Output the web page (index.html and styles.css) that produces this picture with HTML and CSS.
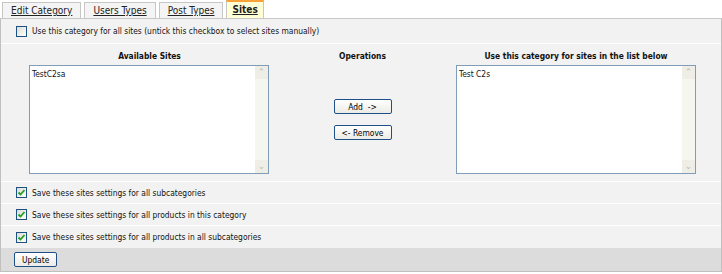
FILE: index.html
```html
<!DOCTYPE html>
<html lang="en">
<head>
    <meta charset="UTF-8">
    <title>Category Sites</title>
    <link rel="stylesheet" href="styles.css">
</head>
<body>
    <div class="tabs">
        <a class="tab" href="#">Edit Category</a>
        <a class="tab" href="#">Users Types</a>
        <a class="tab" href="#">Post Types</a>
        <a class="tab active" href="#">Sites</a>
    </div>
    <div class="panel">
        <div class="row first">
            <span class="check"></span>
            <span>Use this category for all sites (untick this checkbox to select sites manually)</span>
        </div>
        <div class="sites">
            <div class="col">
                <div class="heading">Available Sites</div>
                <div class="listbox">
                    <div class="items">TestC2sa</div>
                    <div class="scroll">
                        <span class="arrow">&#8963;</span>
                        <span class="arrow">&#8964;</span>
                    </div>
                </div>
            </div>
            <div class="col ops">
                <div class="heading">Operations</div>
                <button class="btn wide">Add &nbsp;-&gt;</button>
                <button class="btn wide">&lt;- Remove</button>
            </div>
            <div class="col">
                <div class="heading">Use this category for sites in the list below</div>
                <div class="listbox">
                    <div class="items">Test C2s</div>
                    <div class="scroll">
                        <span class="arrow">&#8963;</span>
                        <span class="arrow">&#8964;</span>
                    </div>
                </div>
            </div>
        </div>
        <div class="row">
            <span class="check on"><svg width="9" height="9" viewBox="0 0 9 9"><path d="M1.5 4.5 L3.5 6.5 L7.5 2" fill="none" stroke="#21a121" stroke-width="1.8"/></svg></span>
            <span>Save these sites settings for all subcategories</span>
        </div>
        <div class="row">
            <span class="check on"><svg width="9" height="9" viewBox="0 0 9 9"><path d="M1.5 4.5 L3.5 6.5 L7.5 2" fill="none" stroke="#21a121" stroke-width="1.8"/></svg></span>
            <span>Save these sites settings for all products in this category</span>
        </div>
        <div class="row last">
            <span class="check on"><svg width="9" height="9" viewBox="0 0 9 9"><path d="M1.5 4.5 L3.5 6.5 L7.5 2" fill="none" stroke="#21a121" stroke-width="1.8"/></svg></span>
            <span>Save these sites settings for all products in all subcategories</span>
        </div>
        <div class="bar">
            <button class="btn">Update</button>
        </div>
    </div>
</body>
</html>
```

FILE: styles.css
```css
body {
    margin: 0;
    font-family: "DejaVu Sans Condensed", "DejaVu Sans", sans-serif;
    font-size: 8.4px;
    color: #111;
    background: #fff;
}

.tabs {
    display: flex;
    align-items: flex-end;
    gap: 3px;
    padding-left: 2px;
    height: 18px;
}

.tab {
    display: block;
    height: 15px;
    line-height: 15px;
    padding: 0 8px;
    font-size: 10px;
    color: #222;
    background: #f4f4f4;
    border: 1px solid #c6c6c6;
    border-bottom: none;
}

.tab.active {
    height: 16px;
    font-weight: bold;
    background: #ffffd6;
    border-top: 2px solid #f8a33a;
    padding: 0 5px;
}

.panel {
    border: 1px solid #c0c0c0;
    border-top: 1px solid #c8c8c8;
    background: #f2f2f2;
}

.row {
    display: flex;
    align-items: center;
    gap: 5px;
    height: 21px;
    padding-left: 15px;
    border-bottom: 1px solid #fff;
}

.row.first {
    height: 24px;
}

.row.last {
    height: 22px;
    border-bottom: none;
}

.check {
    display: flex;
    align-items: center;
    justify-content: center;
    width: 9px;
    height: 9px;
    border: 1px solid #1c5180;
    background: linear-gradient(135deg, #dcdcd5, #fff);
}

.sites {
    display: grid;
    grid-template-columns: 268px 187px 240px;
    padding: 3px 0 7px 0;
    border-bottom: 1px solid #fff;
}

.col {
    display: flex;
    flex-direction: column;
    align-items: flex-end;
}

.heading {
    align-self: stretch;
    text-align: center;
    font-weight: bold;
    height: 18px;
    padding-top: 3px;
    line-height: 12px;
    box-sizing: border-box;
    margin-left: 29px;
}

.col:last-child .heading {
    margin-left: 0;
}

.ops {
    align-items: center;
}

.ops .heading {
    margin: 0;
}

.listbox {
    display: flex;
    width: 238px;
    height: 107px;
    border: 1px solid #7f9db9;
    background: #fff;
}

.items {
    flex: 1;
    padding: 3px 2px;
}

.scroll {
    width: 13px;
    display: flex;
    flex-direction: column;
    justify-content: space-between;
    background: #f6f6f1;
}

.arrow {
    height: 13px;
    line-height: 13px;
    text-align: center;
    color: #b8b8b0;
    background: #eeede6;
    font-size: 9px;
}

.btn {
    font-family: inherit;
    font-size: 8.4px;
    height: 15px;
    padding: 0 7px;
    border: 1px solid #1f4f87;
    border-radius: 2px;
    background: linear-gradient(#fff, #ecebe6);
    color: #000;
}

.wide {
    width: 58px;
    margin-top: 34px;
}

.wide + .wide {
    margin-top: 11px;
}

.bar {
    background: #dcdcdc;
    height: 23px;
    display: flex;
    align-items: center;
    padding-left: 13px;
}
```
